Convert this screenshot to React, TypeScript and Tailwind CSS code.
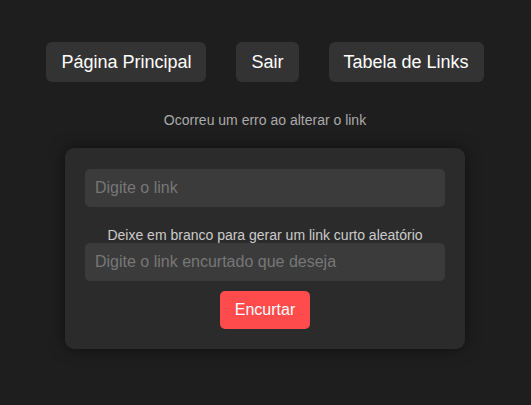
const navItems = ["Página Principal", "Sair", "Tabela de Links"];

const App = () => {
  return (
    <div className="min-h-[405px] bg-[#1e1e1e] pt-[42px] pr-px font-['Liberation_Sans',Arial,sans-serif]">
      <nav className="flex justify-center gap-[30px]">
        {navItems.map((item) => (
          <button
            key={item}
            className="h-10 px-[15px] rounded-md bg-[#333333] text-white text-lg leading-6"
          >
            {item}
          </button>
        ))}
      </nav>

      <p className="mt-[30px] text-center text-sm leading-4 text-[#aaaaaa]">
        Ocorreu um erro ao alterar o link
      </p>

      <div className="mx-auto mt-5 w-[400px] rounded-[9px] bg-[#2b2b2b] px-5 pt-[21px] pb-5 shadow-[0_0_15px_rgba(0,0,0,0.5)]">
        <form className="flex flex-col items-center">
          <input
            type="text"
            placeholder="Digite o link"
            className="h-[38px] w-full rounded-[5px] bg-[#3b3b3b] px-[10px] text-base text-white placeholder:text-[#777777] outline-none"
          />
          <label className="mt-5 text-center text-sm leading-4 text-[#cccccc]">
            Deixe em branco para gerar um link curto aleatório
          </label>
          <input
            type="text"
            placeholder="Digite o link encurtado que deseja"
            className="h-[38px] w-full rounded-[5px] bg-[#3b3b3b] px-[10px] text-base text-white placeholder:text-[#777777] outline-none"
          />
          <button
            type="submit"
            className="mt-[10px] h-[38px] rounded-[5px] bg-[#ff4b4b] px-[15px] text-base text-white"
          >
            Encurtar
          </button>
        </form>
      </div>
    </div>
  );
};

export default App;
